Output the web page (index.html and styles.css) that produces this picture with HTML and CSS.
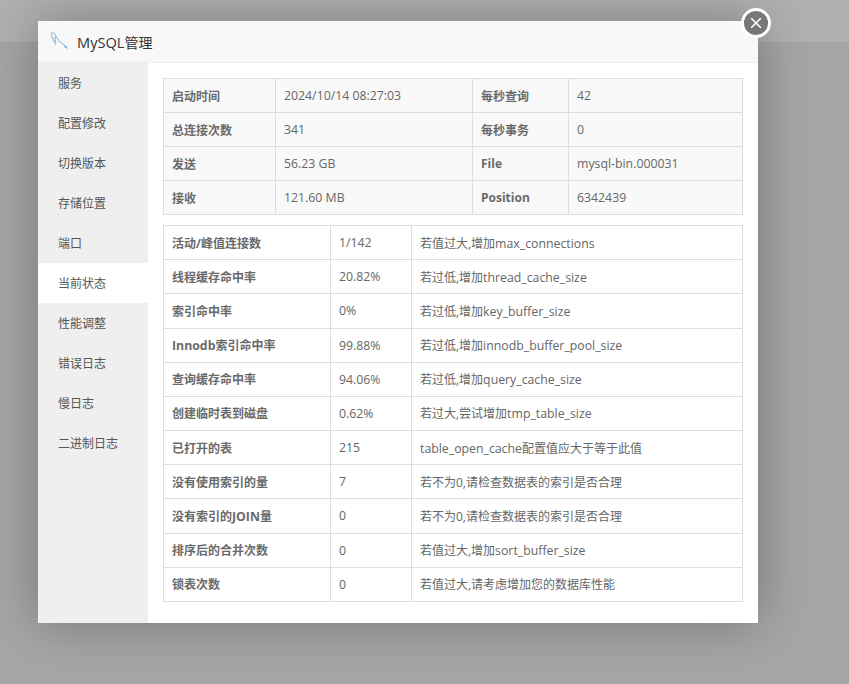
FILE: index.html
```html
<!DOCTYPE html>
<html lang="zh">
<head>
<meta charset="utf-8">
<title>MySQL管理</title>
<link rel="stylesheet" href="styles.css">
</head>
<body>
<div class="topbar"></div>
<div class="modal">
  <a class="close" aria-label="关闭"><svg viewBox="0 0 12 12" width="12" height="12"><path d="M1.200 1.200 10.800 10.800M10.800 1.200 1.200 10.800" stroke="#fff" stroke-width="1.600" fill="none"/></svg></a>
  <div class="head">
    <svg class="logo" viewBox="0 0 20 20" width="20" height="20"><path d="M1 2.500C2.500 1.300 4 1.800 5.500 4.300 7 7 9 11 12.500 12.800 14.500 13.800 16 15 17 17.800M1.300 3.500C2 6 3.500 9.500 5.500 13.500M5.500 5.500C4.800 7.500 5 9.500 6 11.500M14 15.800 17 16" fill="none" stroke="#6f9fc4" stroke-width=".9"/></svg>
    <span><span class="tl">MySQL</span>管理</span>
  </div>
  <div class="main">
    <ul class="menu">
      <li>服务</li><li>配置修改</li><li>切换版本</li><li>存储位置</li><li>端口</li>
      <li class="on">当前状态</li><li>性能调整</li><li>错误日志</li><li>慢日志</li><li>二进制日志</li>
    </ul>
    <div class="content">
      <table class="t t1">
        <colgroup><col class="a1"><col class="a2"><col class="a3"><col></colgroup>
        <tr><th>启动时间</th><td class="n">2024/10/14 08:27:03</td><th>每秒查询</th><td class="n">42</td></tr>
        <tr><th>总连接次数</th><td class="n">341</td><th>每秒事务</th><td class="n">0</td></tr>
        <tr><th>发送</th><td class="n">56.23 GB</td><th>File</th><td class="n">mysql-bin.000031</td></tr>
        <tr><th>接收</th><td class="n">121.60 MB</td><th>Position</th><td class="n">6342439</td></tr>
      </table>
      <table class="t t2">
        <colgroup><col class="b1"><col class="b2"><col></colgroup>
        <tr><th>活动/峰值连接数</th><td class="n">1/142</td><td>若值过大,增加<span class="n">max_connections</span></td></tr>
        <tr><th>线程缓存命中率</th><td class="n">20.82%</td><td>若过低,增加<span class="n">thread_cache_size</span></td></tr>
        <tr><th>索引命中率</th><td class="n">0%</td><td>若过低,增加<span class="n">key_buffer_size</span></td></tr>
        <tr><th><span class="n">Innodb</span>索引命中率</th><td class="n">99.88%</td><td>若过低,增加<span class="n">innodb_buffer_pool_size</span></td></tr>
        <tr><th>查询缓存命中率</th><td class="n">94.06%</td><td>若过低,增加<span class="n">query_cache_size</span></td></tr>
        <tr><th>创建临时表到磁盘</th><td class="n">0.62%</td><td>若过大,尝试增加<span class="n">tmp_table_size</span></td></tr>
        <tr><th>已打开的表</th><td class="n">215</td><td><span class="n">table_open_cache</span>配置值应大于等于此值</td></tr>
        <tr><th>没有使用索引的量</th><td class="n">7</td><td>若不为0,请检查数据表的索引是否合理</td></tr>
        <tr><th>没有索引的<span class="n">JOIN</span>量</th><td class="n">0</td><td>若不为0,请检查数据表的索引是否合理</td></tr>
        <tr><th>排序后的合并次数</th><td class="n">0</td><td>若值过大,增加<span class="n">sort_buffer_size</span></td></tr>
        <tr><th>锁表次数</th><td class="n">0</td><td>若值过大,请考虑增加您的数据库性能</td></tr>
      </table>
    </div>
  </div>
</div>
</body>
</html>
```
FILE: styles.css
```css
* { box-sizing: border-box; }
html, body { margin: 0; height: 100%; }
body {
  background: #a6a6a6;
  font-family: "Open Sans", "Noto Sans CJK SC", sans-serif;
  font-size: 12px;
  color: #666;
  overflow: hidden;
  padding: 21px 0 0 38px;
}
.topbar {
  position: absolute; left: 0; top: 0; right: 0; height: 43px;
  background: #b0b0b0;
  border-bottom: 1px solid #a3a3a3;
}
.modal {
  position: relative;
  width: 720px; height: 602px;
  background: #fff;
  box-shadow: 0 0 50px rgba(0,0,0,.3);
}
.close {
  position: absolute; right: -13px; top: -13px;
  width: 30px; height: 30px;
  border-radius: 50%;
  border: 3px solid #fff;
  background: #777;
  display: flex; align-items: center; justify-content: center;
}
.head {
  height: 42px;
  background: #f8f8f8;
  border-bottom: 1px solid #eee;
  display: flex; align-items: center;
  padding-left: 12px;
  font-size: 14px;
  color: #333;
}
.head > span { margin-left: 7px; }
.tl { font-size: 14.600px; }
.logo { margin-top: -2px; }
.main { display: flex; height: 560px; }
.menu {
  list-style: none; margin: 0; padding: 0;
  width: 110px; background: #efefef;
  color: #555;
}
.menu li { height: 40px; line-height: 42px; padding-left: 20px; }
.menu li.on { background: #fff; }
.content { flex: 1; padding: 15px 15px 0; }
.t {
  width: 580px;
  border-collapse: collapse;
  table-layout: fixed;
}
.t th, .t td {
  border: 1px solid #ddd;
  padding: 0 8px;
  text-align: left;
  font-weight: normal;
}
.t th { font-weight: 700; color: #6a6a6a; }
.t1 th, .t1 td { height: 34px; }
.t2 th, .t2 td { height: 34.180px; }
.t .n { font-size: 12.300px; }
.t1 { background: #f9f9f9; margin-bottom: 10px; }
.a1 { width: 112px; }
.a2 { width: 197px; }
.a3 { width: 96px; }
.b1 { width: 167px; }
.b2 { width: 81px; }
```
